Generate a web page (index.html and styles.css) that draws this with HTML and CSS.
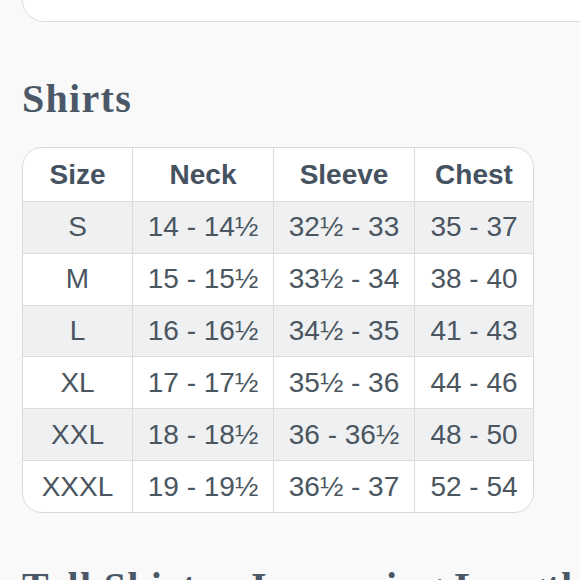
FILE: index.html
```html
<!DOCTYPE html>
<html lang="en">
<head>
<meta charset="utf-8">
<title>Size chart</title>
<link rel="stylesheet" href="styles.css">
</head>
<body>
<div class="page">
  <div class="top-card"></div>
  <h2 class="section-title first">Shirts</h2>
  <div class="table-wrap">
    <table class="size-table">
      <thead>
        <tr><th class="c1">Size</th><th class="c2">Neck</th><th class="c3">Sleeve</th><th class="c4">Chest</th></tr>
      </thead>
      <tbody>
        <tr><td>S</td><td>14 - 14½</td><td>32½ - 33</td><td>35 - 37</td></tr>
        <tr><td>M</td><td>15 - 15½</td><td>33½ - 34</td><td>38 - 40</td></tr>
        <tr><td>L</td><td>16 - 16½</td><td>34½ - 35</td><td>41 - 43</td></tr>
        <tr><td>XL</td><td>17 - 17½</td><td>35½ - 36</td><td>44 - 46</td></tr>
        <tr><td>XXL</td><td>18 - 18½</td><td>36 - 36½</td><td>48 - 50</td></tr>
        <tr><td>XXXL</td><td>19 - 19½</td><td>36½ - 37</td><td>52 - 54</td></tr>
      </tbody>
    </table>
  </div>
  <h2 class="section-title next">Tall Shirts - Increasing Length</h2>
</div>
</body>
</html>
```

FILE: styles.css
```css
html, body {
  margin: 0;
  padding: 0;
  background: #f9f9f9;
  overflow: hidden;
  height: 100%;
}

.page {
  padding-left: 22px;
  width: 580px;
  box-sizing: border-box;
}

.top-card {
  height: 60px;
  margin-top: -40px;
  margin-right: -60px;
  background: #ffffff;
  border: 1px solid #dcdcdc;
  border-radius: 22px;
}

.section-title {
  font-family: "Liberation Serif", "Times New Roman", serif;
  font-weight: bold;
  font-size: 40px;
  line-height: 48px;
  color: #4a5867;
  margin: 0;
  white-space: nowrap;
  letter-spacing: 1.3px;
}

.section-title.first {
  margin-top: 53px;
  margin-bottom: 24px;
}

.section-title.next {
  margin-top: 50px;
}

.table-wrap {
  width: 512px;
  border: 1px solid #d9dadb;
  border-radius: 20px;
  overflow: hidden;
  background: #ffffff;
  box-sizing: border-box;
}

.size-table {
  width: 100%;
  border-collapse: separate;
  border-spacing: 0;
  font-family: "Liberation Sans", Arial, sans-serif;
  font-size: 28px;
  color: #4b5661;
  table-layout: fixed;
}

.size-table .c1 { width: 109px; }
.size-table .c2 { width: 140px; }
.size-table .c3 { width: 140px; }
.size-table .c4 { width: auto; }

.size-table th,
.size-table td {
  text-align: center;
  vertical-align: middle;
  padding: 0;
  border-right: 1px solid #dadcde;
  border-bottom: 1px solid #dadcde;
  white-space: nowrap;
}

.size-table th:last-child,
.size-table td:last-child {
  border-right: none;
}

.size-table tbody tr:last-child td {
  border-bottom: none;
}

.size-table th {
  height: 53px;
  font-weight: bold;
  color: #45525f;
}

.size-table td {
  height: 50.84px;
}

.size-table tbody tr:nth-child(odd) td {
  background: #eef0f2;
}
```
